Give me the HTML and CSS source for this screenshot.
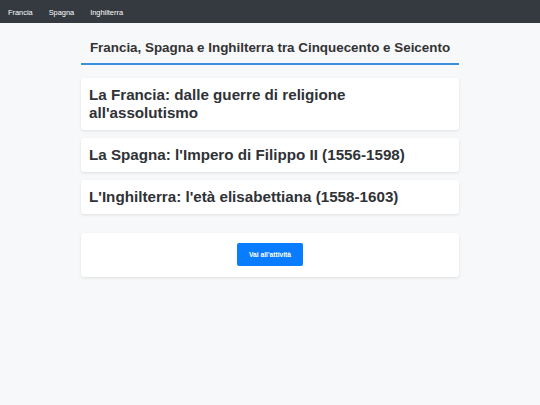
FILE: index.html
```html
<!DOCTYPE html>
<html lang="it">
<head>
<meta charset="utf-8">
<title>Francia, Spagna e Inghilterra</title>
<link rel="stylesheet" href="styles.css">
</head>
<body>
<nav class="navbar">
  <a class="nav-link" href="#">Francia</a>
  <a class="nav-link" href="#">Spagna</a>
  <a class="nav-link" href="#">Inghilterra</a>
</nav>
<main class="container">
  <h1 class="page-title">Francia, Spagna e Inghilterra tra Cinquecento e Seicento</h1>
  <section class="card"><h2 class="card-title">La Francia: dalle guerre di religione all'assolutismo</h2></section>
  <section class="card"><h2 class="card-title">La Spagna: l'Impero di Filippo II (1556-1598)</h2></section>
  <section class="card"><h2 class="card-title">L'Inghilterra: l'età elisabettiana (1558-1603)</h2></section>
  <section class="card card-action"><a class="btn" href="#">Vai all'attività</a></section>
</main>
</body>
</html>
```

FILE: styles.css
```css
* { box-sizing: border-box; }
html, body { margin: 0; padding: 0; }
body {
  background: #f7f8fa;
  font-family: "Liberation Sans", Arial, sans-serif;
  color: #333;
  width: 540px;
  height: 405px;
}
.navbar {
  background: #343a40;
  height: 23px;
  display: flex;
  align-items: center;
  padding-top: 1px;
}
.nav-link {
  color: #fff;
  text-decoration: none;
  font-size: 7.4px;
  padding: 0 8px;
}
.container {
  width: 378px;
  margin: 0 auto;
  padding-top: 17px;
}
.page-title {
  margin: 0 0 13px 0;
  padding: 0 0 7px 0;
  font-size: 13.4px;
  line-height: 16px;
  font-weight: bold;
  text-align: center;
  color: #333;
  border-bottom: 2px solid #3b8fdc;
}
.card {
  background: #fff;
  border-radius: 3px;
  box-shadow: 0 1px 3px rgba(0,0,0,0.10);
  padding: 8px;
  margin-bottom: 8px;
}
.card-title {
  margin: 0;
  font-size: 15.2px;
  line-height: 18px;
  font-weight: bold;
  color: #2f3236;
}
.card-action {
  margin-top: 19px;
  padding: 10px 8px 11px;
  display: flex;
  justify-content: center;
}
.btn {
  display: inline-block;
  background: #0a7cff;
  color: #fff;
  text-decoration: none;
  font-size: 6.7px;
  font-weight: bold;
  height: 23px;
  line-height: 23px;
  padding: 0 12px;
  border-radius: 2px;
}
```
